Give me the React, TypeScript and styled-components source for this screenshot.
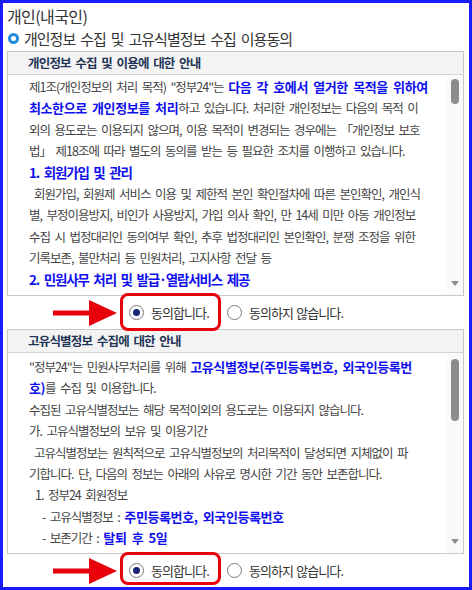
import React from 'react';
import styled, { createGlobalStyle } from 'styled-components';

const Global = createGlobalStyle`
  html, body { margin: 0; padding: 0; background: #fff; }
  body { font-family: "Noto Sans CJK KR", "Noto Sans", sans-serif; }
`;

const Page = styled.div`
  box-sizing: border-box;
  width: 472px;
  height: 590px;
  border: 3px solid #1c1cf8;
  padding: 2px 5px 0 4px;
  background: #fff;
  overflow: hidden;
  display: flex;
  flex-direction: column;
`;

const Title = styled.h1`
  margin: 0;
  font-size: 16px;
  font-weight: 400;
  line-height: 22px;
  color: #333;
  letter-spacing: -0.6px;
`;

const Subtitle = styled.h2`
  margin: 0 0 1px 0;
  height: 24px;
  display: flex;
  align-items: center;
  gap: 5px;
  padding-left: 1px;
  font-size: 15px;
  font-weight: 400;
  color: #333;
  letter-spacing: -1px;
  word-spacing: 2.6px;
`;

const Ring = styled.span`
  box-sizing: border-box;
  width: 11px;
  height: 11px;
  border-radius: 50%;
  border: 3px solid #1f8ce2;
  flex: none;
`;

const Box = styled.section`
  flex: none;
  border: 1px solid #c8c8c8;
  display: flex;
  flex-direction: column;
`;

const BoxHeader = styled.div`
  height: 22px;
  line-height: 22px;
  background: #f3f3f3;
  border-bottom: 1px solid #d3d3d3;
  padding-left: 20px;
  font-size: 12.5px;
  font-weight: 700;
  color: #1f3556;
  letter-spacing: -0.8px;
  word-spacing: 2.5px;
`;

const BoxBody = styled.div<{ $h: number }>`
  display: flex;
  height: ${p => p.$h}px;
`;

const TextCol = styled.div<{ $pt: number }>`
  flex: 1;
  overflow: hidden;
  padding: ${p => p.$pt}px 0 0 21px;
`;

const ScrollCol = styled.div`
  width: 16px;
  flex: none;
  background: #fafafa;
  display: flex;
  flex-direction: column;
  align-items: center;
  justify-content: space-between;
`;

const Thumb = styled.div<{ $top: number; $h: number }>`
  margin-top: ${p => p.$top}px;
  width: 8px;
  height: ${p => p.$h}px;
  border-radius: 4px;
  background: #8c8c8c;
`;

const DownArrow = styled.div`
  width: 0;
  height: 0;
  margin-bottom: 9px;
  border-left: 4px solid transparent;
  border-right: 4px solid transparent;
  border-top: 5px solid #8e8e8e;
`;

const Line = styled.div<{ $indent?: number }>`
  white-space: nowrap;
  height: 21.4px;
  line-height: 21.4px;
  padding-left: ${p => p.$indent ?? 0}px;
  font-size: 12.5px;
  color: #444;
  letter-spacing: -1px;
  word-spacing: 2.7px;
`;

const HeadLine = styled(Line)`
  font-size: 13.5px;
  font-weight: 700;
  color: #1010ee;
  letter-spacing: -1.15px;
`;

const Em = styled.b`
  font-size: 13px;
  font-weight: 700;
  color: #1010ee;
  letter-spacing: -0.4px;
`;

const RadioRow = styled.div<{ $h: number }>`
  flex: none;
  height: ${p => p.$h}px;
  display: flex;
  align-items: center;
  justify-content: center;
  gap: 18px;
  padding-left: 1px;
`;

const Option = styled.label`
  position: relative;
  display: inline-flex;
  align-items: center;
  gap: 7px;
  height: 20px;
  line-height: 20px;
  font-size: 13px;
  color: #333;
  letter-spacing: -0.9px;
  word-spacing: 1px;
`;

const Circle = styled.span<{ $on?: boolean }>`
  box-sizing: border-box;
  width: 15px;
  height: 15px;
  border-radius: 50%;
  border: 1px solid #7a7a7a;
  background: #fff;
  display: inline-flex;
  align-items: center;
  justify-content: center;
  &::after {
    content: '';
    width: 7px;
    height: 7px;
    border-radius: 50%;
    background: ${p => (p.$on ? '#1b2577' : 'transparent')};
  }
`;

const Highlight = styled.span<{ $top: number; $bottom: number }>`
  position: absolute;
  left: -9px;
  right: -12px;
  top: ${p => p.$top}px;
  bottom: ${p => p.$bottom}px;
  border: 3px solid #e8000b;
  border-radius: 8px;
  pointer-events: none;
`;

const Pointer = styled.svg`
  position: absolute;
  left: -76px;
  top: 50%;
  margin-top: -14px;
`;

function Arrow() {
  return (
    <Pointer width="64" height="28" viewBox="0 0 64 28">
      <rect x="0" y="11.5" width="38" height="5" fill="#e8000b" />
      <polygon points="36,1 64,14 36,27" fill="#e8000b" />
    </Pointer>
  );
}

function Radios({ h, top, bottom }: { h: number; top: number; bottom: number }) {
  return (
    <RadioRow $h={h}>
      <Option>
        <Arrow />
        <Highlight $top={top} $bottom={bottom} />
        <Circle $on />
        동의합니다.
      </Option>
      <Option>
        <Circle />
        동의하지 않습니다.
      </Option>
    </RadioRow>
  );
}

export default function App() {
  return (
    <>
      <Global />
      <Page>
        <Title>개인(내국인)</Title>
        <Subtitle>
          <Ring />
          개인정보 수집 및 고유식별정보 수집 이용동의
        </Subtitle>

        <Box>
          <BoxHeader>개인정보 수집 및 이용에 대한 안내</BoxHeader>
          <BoxBody $h={220}>
            <TextCol $pt={1}>
              <Line>
                제1조(개인정보의 처리 목적) "정부24"는 <Em>다음 각 호에서 열거한 목적을 위하여</Em>
              </Line>
              <Line>
                <Em>최소한으로 개인정보를 처리</Em>하고 있습니다. 처리한 개인정보는 다음의 목적 이
              </Line>
              <Line>외의 용도로는 이용되지 않으며, 이용 목적이 변경되는 경우에는 「개인정보 보호</Line>
              <Line>법」 제18조에 따라 별도의 동의를 받는 등 필요한 조치를 이행하고 있습니다.</Line>
              <HeadLine>1. 회원가입 및 관리</HeadLine>
              <Line $indent={5}>회원가입, 회원제 서비스 이용 및 제한적 본인 확인절차에 따른 본인확인, 개인식</Line>
              <Line>별, 부정이용방지, 비인가 사용방지, 가입 의사 확인, 만 14세 미만 아동 개인정보</Line>
              <Line>수집 시 법정대리인 동의여부 확인, 추후 법정대리인 본인확인, 분쟁 조정을 위한</Line>
              <Line>기록보존, 불만처리 등 민원처리, 고지사항 전달 등</Line>
              <HeadLine>2. 민원사무 처리 및 발급·열람서비스 제공</HeadLine>
            </TextCol>
            <ScrollCol>
              <Thumb $top={4} $h={25} />
              <DownArrow />
            </ScrollCol>
          </BoxBody>
        </Box>

        <Radios h={33} top={-10} bottom={-8} />

        <Box>
          <BoxHeader>고유식별정보 수집에 대한 안내</BoxHeader>
          <BoxBody $h={200}>
            <TextCol $pt={3}>
              <Line>
                "정부24"는 민원사무처리를 위해 <Em>고유식별정보(주민등록번호, 외국인등록번</Em>
              </Line>
              <Line>
                <Em>호)</Em>를 수집 및 이용합니다.
              </Line>
              <Line>수집된 고유식별정보는 해당 목적이외의 용도로는 이용되지 않습니다.</Line>
              <Line>가. 고유식별정보의 보유 및 이용기간</Line>
              <Line $indent={5}>고유식별정보는 원칙적으로 고유식별정보의 처리목적이 달성되면 지체없이 파</Line>
              <Line>기합니다. 단, 다음의 정보는 아래의 사유로 명시한 기간 동안 보존합니다.</Line>
              <Line $indent={6}>1. 정부24 회원정보</Line>
              <Line $indent={13}>
                - 고유식별정보 : <Em>주민등록번호, 외국인등록번호</Em>
              </Line>
              <Line $indent={13}>
                - 보존기간 : <Em>탈퇴 후 5일</Em>
              </Line>
            </TextCol>
            <ScrollCol>
              <Thumb $top={6} $h={62} />
              <DownArrow />
            </ScrollCol>
          </BoxBody>
        </Box>

        <Radios h={33} top={-9} bottom={-4} />
      </Page>
    </>
  );
}
